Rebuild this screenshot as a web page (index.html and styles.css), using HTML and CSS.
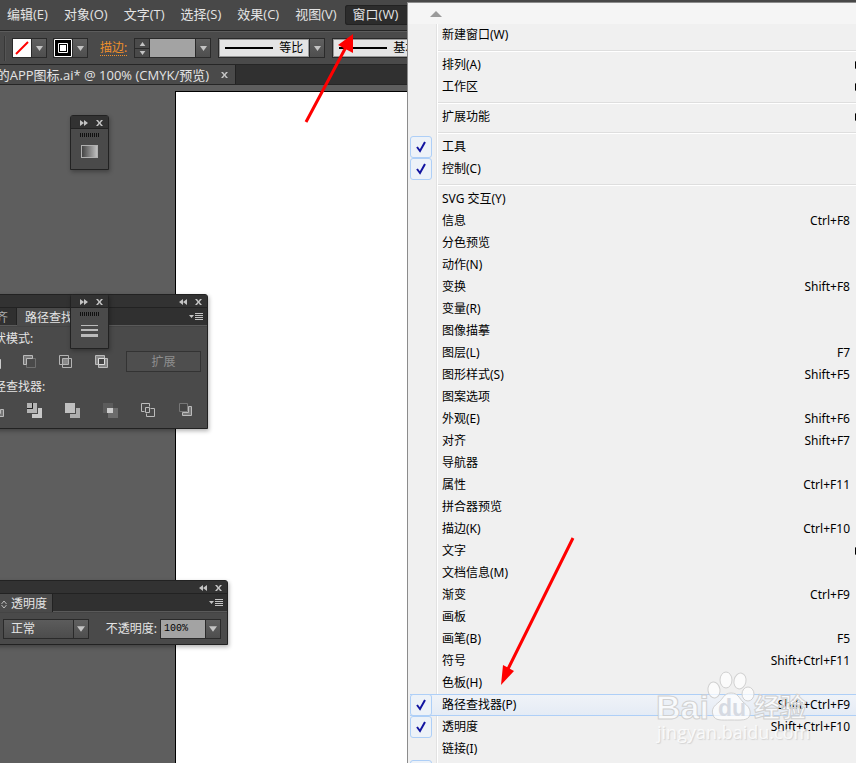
FILE: index.html
```
<!DOCTYPE html>
<html lang="zh-CN">
<head>
    <meta charset="UTF-8">
    <meta name="viewport" content="width=device-width, initial-scale=1.0">
    <title>APP图标.ai</title>
    <link rel="stylesheet" href="styles.css">
</head>
<body>
    <svg class="defs" aria-hidden="true">
        <symbol id="down" viewBox="0 0 7 5"><path d="M0 0h7L3.5 5z"/></symbol>
        <symbol id="up" viewBox="0 0 7 5"><path d="M0 5h7L3.5 0z"/></symbol>
        <symbol id="expand" viewBox="0 0 8 6"><path d="M0 0l4 3-4 3zM4 0l4 3-4 3z"/></symbol>
        <symbol id="collapse" viewBox="0 0 8 6"><path d="M4 0L0 3l4 3zM8 0L4 3l4 3z"/></symbol>
        <symbol id="close" viewBox="0 0 7 6"><path d="M0 0h2l1.500 2L5 0h2L4.500 3 7 6H5L3.500 4 2 6H0l2.500-3z"/></symbol>
        <symbol id="flyout" viewBox="0 0 14 9"><path d="M0 3h5L2.500 6zM6 1h8v1H6zM6 3h8v1H6zM6 5h8v1H6zM6 7h8v1H6z"/></symbol>
        <symbol id="check" viewBox="0 0 10 12"><path d="M1 6l3 4 5-9" fill="none" stroke="#1214a0" stroke-width="2"/></symbol>
    </svg>

    <header class="top">
        <nav class="menubar">
            <button>编辑(E)</button>
            <button>对象(O)</button>
            <button>文字(T)</button>
            <button>选择(S)</button>
            <button>效果(C)</button>
            <button>视图(V)</button>
            <button class="open">窗口(W)</button>
        </nav>

        <div class="controls">
            <span class="grip"></span>
            <div class="combo swatch">
                <button class="fill" aria-label="填色"><svg width="18" height="18"><path d="M3 15L15 3" stroke="#f00" stroke-width="2"/></svg></button>
                <button class="drop" aria-label="填色选项"><svg width="7" height="5"><use href="#down"/></svg></button>
            </div>
            <div class="combo swatch">
                <button class="stroke" aria-label="描边色"><svg width="18" height="18"><path d="M.5.5h17v17H.5zM4.500 4.500h9v9h-9z" fill="none" stroke="#fff"/><path d="M6 6h6v6H6z" fill="#fff"/></svg></button>
                <button class="drop" aria-label="描边选项"><svg width="7" height="5"><use href="#down"/></svg></button>
            </div>
            <label class="link" for="weight">描边:</label>
            <div class="combo weight">
                <div class="spin">
                    <button aria-label="增加"><svg width="7" height="4"><use href="#up"/></svg></button>
                    <button aria-label="减少"><svg width="7" height="4"><use href="#down"/></svg></button>
                </div>
                <input id="weight" type="text">
                <button class="drop" aria-label="粗细选项"><svg width="7" height="5"><use href="#down"/></svg></button>
            </div>
            <div class="combo line">
                <select aria-label="宽度配置"><option>等比</option></select>
                <span class="drop"><svg width="7" height="5"><use href="#down"/></svg></span>
            </div>
            <div class="combo line">
                <select aria-label="画笔定义"><option>基本</option></select>
                <span class="drop"><svg width="7" height="5"><use href="#down"/></svg></span>
            </div>
        </div>

        <div class="tabs">
            <div class="doc-tab">
                <span class="doc-name">的APP图标.ai* @ 100% (CMYK/预览)</span>
                <button aria-label="关闭"><svg width="7" height="6"><use href="#close"/></svg></button>
            </div>
        </div>
    </header>

    <main class="workspace">
        <div class="artboard"></div>
    </main>

    <section class="panel pathfinder">
        <div class="panel-head">
            <button aria-label="折叠"><svg width="8" height="6"><use href="#collapse"/></svg></button>
            <button aria-label="关闭"><svg width="7" height="6"><use href="#close"/></svg></button>
        </div>
        <div class="panel-tabs">
            <button class="tab">对齐</button>
            <button class="tab active">路径查找器</button>
            <button class="flyout" aria-label="面板菜单"><svg width="14" height="9"><use href="#flyout"/></svg></button>
        </div>
        <div class="panel-body">
            <p>形状模式:</p>
            <div class="shapes">
                <button aria-label="联集"><svg width="14" height="14"><path d="M.5.5h9v4h4v9h-9v-4h-4z" fill="#777" stroke="#ccc"/></svg></button>
                <button aria-label="减去顶层"><svg width="14" height="14"><path d="M3.500 3.500h9v9h-9z" fill="none" stroke="#707070"/><path d="M.5.5h9v3h-6v6h-3z" fill="#777" stroke="#bbb"/></svg></button>
                <button aria-label="交集"><svg width="14" height="14"><path d="M4 4h5v5H4z" fill="#888"/><path d="M.5.5h9v9h-9zM3.500 3.500h9v9h-9z" fill="none" stroke="#b4b4b4"/></svg></button>
                <button aria-label="差集"><svg width="14" height="14"><path d="M.5.5h9v9h-9zM3.500 3.500h9v9h-9z" fill="#858585" stroke="#bbb"/><path d="M3.500 3.500h6v6h-6z" fill="#444" stroke="#ddd"/></svg></button>
                <button class="extend" disabled>扩展</button>
            </div>
            <p>路径查找器:</p>
            <div class="finders">
                <button aria-label="分割"><svg width="15" height="15"><path d="M.5 9.500h8v-9M11.500 6.500h3v7h-8v-3h5z" fill="#777" stroke="#bbb"/></svg></button>
                <button aria-label="修边"><svg width="15" height="15"><path d="M0 5h5V0H0zM6 0h4v10H0V6h6z" fill="#b4b4b4"/><path d="M11 5h4v10H5v-4h6z" fill="#c8c8c8"/><path d="M0 5.500h5.500V0" stroke="#222" fill="none"/></svg></button>
                <button aria-label="合并"><svg width="15" height="15"><path d="M0 0h10v10H0z" fill="#c0c0c0"/><path d="M11 5h4v10H5v-4h6z" fill="#adadad"/></svg></button>
                <button aria-label="裁剪"><svg width="15" height="15"><path d="M0 0h10v10H0z" fill="#5c5c5c"/><path d="M5 5h10v10H5z" fill="#6c6c6c"/><path d="M4 5h6v5H4z" fill="#ccc"/></svg></button>
                <button aria-label="轮廓"><svg width="15" height="15"><path d="M8.500 3.500v-3h-8v8h3M9.500 5.500h4v8h-8v-3M4.500 4.500h4v5h-4z" fill="none" stroke="#bbb"/></svg></button>
                <button aria-label="减去后方对象"><svg width="15" height="15"><path d="M.5.5h8v8h-8z" fill="#444" stroke="#777"/><path d="M9.500 3.500h3v9h-9v-3h6z" fill="#777" stroke="#bbb"/></svg></button>
            </div>
        </div>
    </section>

    <section class="panel mini gradient">
        <div class="panel-head">
            <button aria-label="展开"><svg width="8" height="6"><use href="#expand"/></svg></button>
            <button aria-label="关闭"><svg width="7" height="6"><use href="#close"/></svg></button>
        </div>
        <span class="dots"></span>
        <button class="mini-icon" aria-label="渐变"><span class="gradient-icon"></span></button>
    </section>

    <section class="panel mini strokes">
        <div class="panel-head">
            <button aria-label="展开"><svg width="8" height="6"><use href="#expand"/></svg></button>
            <button aria-label="关闭"><svg width="7" height="6"><use href="#close"/></svg></button>
        </div>
        <span class="dots"></span>
        <button class="mini-icon" aria-label="描边"><svg width="17" height="14"><path d="M0 1h17v1H0zM0 5h17v2H0zM0 10h17v3H0z" fill="#bbb"/></svg></button>
    </section>

    <section class="panel opacity">
        <div class="panel-head">
            <button aria-label="折叠"><svg width="8" height="6"><use href="#collapse"/></svg></button>
            <button aria-label="关闭"><svg width="7" height="6"><use href="#close"/></svg></button>
        </div>
        <div class="panel-tabs">
            <button class="tab active"><svg width="6" height="9"><path d="M.5 4L3 1l2.500 3M.5 5L3 8l2.500-3" fill="none" stroke="#bbb"/></svg>透明度</button>
            <button class="flyout" aria-label="面板菜单"><svg width="14" height="9"><use href="#flyout"/></svg></button>
        </div>
        <div class="panel-body opacity-row">
            <div class="combo blend">
                <select aria-label="混合模式"><option>正常</option></select>
                <span class="drop"><svg width="8" height="6"><use href="#down"/></svg></span>
            </div>
            <label for="alpha">不透明度:</label>
            <div class="combo alpha">
                <input id="alpha" type="text" value="100%">
                <button class="drop" aria-label="不透明度选项"><svg width="8" height="6"><use href="#down"/></svg></button>
            </div>
        </div>
    </section>

    <div class="window-menu" role="menu">
        <button class="scroll-up" aria-label="向上滚动"><svg width="12" height="6" viewBox="0 0 12 6"><path d="M0 6L6 0l6 6z"/></svg></button>
        <div class="items">
            <button role="menuitem">新建窗口(W)</button>
            <hr>
            <button role="menuitem" class="sub">排列(A)</button>
            <button role="menuitem" class="sub">工作区</button>
            <hr>
            <button role="menuitem" class="sub">扩展功能</button>
            <hr>
            <button role="menuitem"><span class="mark"><svg width="10" height="12"><use href="#check"/></svg></span>工具</button>
            <button role="menuitem"><span class="mark"><svg width="10" height="12"><use href="#check"/></svg></span>控制(C)</button>
            <hr>
            <button role="menuitem">SVG 交互(Y)</button>
            <button role="menuitem">信息<kbd>Ctrl+F8</kbd></button>
            <button role="menuitem">分色预览</button>
            <button role="menuitem">动作(N)</button>
            <button role="menuitem">变换<kbd>Shift+F8</kbd></button>
            <button role="menuitem">变量(R)</button>
            <button role="menuitem">图像描摹</button>
            <button role="menuitem">图层(L)<kbd>F7</kbd></button>
            <button role="menuitem">图形样式(S)<kbd>Shift+F5</kbd></button>
            <button role="menuitem">图案选项</button>
            <button role="menuitem">外观(E)<kbd>Shift+F6</kbd></button>
            <button role="menuitem">对齐<kbd>Shift+F7</kbd></button>
            <button role="menuitem">导航器</button>
            <button role="menuitem">属性<kbd>Ctrl+F11</kbd></button>
            <button role="menuitem">拼合器预览</button>
            <button role="menuitem">描边(K)<kbd>Ctrl+F10</kbd></button>
            <button role="menuitem" class="sub">文字</button>
            <button role="menuitem">文档信息(M)</button>
            <button role="menuitem">渐变<kbd>Ctrl+F9</kbd></button>
            <button role="menuitem">画板</button>
            <button role="menuitem">画笔(B)<kbd>F5</kbd></button>
            <button role="menuitem">符号<kbd>Shift+Ctrl+F11</kbd></button>
            <button role="menuitem">色板(H)</button>
            <button role="menuitem" class="hover"><span class="mark"><svg width="10" height="12"><use href="#check"/></svg></span>路径查找器(P)<kbd>Shift+Ctrl+F9</kbd></button>
            <button role="menuitem"><span class="mark"><svg width="10" height="12"><use href="#check"/></svg></span>透明度<kbd>Shift+Ctrl+F10</kbd></button>
            <button role="menuitem">链接(I)</button>
            <button role="menuitem" aria-label="下一项"><span class="mark"></span></button>
        </div>
    </div>

    <svg class="arrow" width="856" height="763">
        <path d="M306 122L346 47M573 538L507 671" stroke="#f00" stroke-width="3"/>
        <path d="M353 34l-15 11 15 8zM501 685l2-20 11 6z" fill="#f00"/>
    </svg>

    <svg class="watermark" width="160" height="80">
        <g class="mark-shape">
            <ellipse cx="58" cy="20" rx="6" ry="8" transform="rotate(-8 58 20)"/>
            <ellipse cx="70" cy="10" rx="6" ry="8"/>
            <ellipse cx="84" cy="11" rx="6" ry="8" transform="rotate(12 84 11)"/>
            <ellipse cx="92" cy="24" rx="6" ry="7"/>
            <path d="M75 23c-7 0-8 6-12 9-5 4-8 7-6 13 2 6 8 5 18 5s17 1 19-5c1-6-2-9-7-13-4-4-5-9-12-9z"/>
            <text class="brand" x="0" y="49">Bai</text>
            <text class="brand-cn" x="98" y="47">经验</text>
        </g>
        <text class="paw" x="62" y="46">du</text>
        <text class="site" x="1" y="69">jingyan.baidu.com</text>
    </svg>
</body>
</html>
```

FILE: styles.css
```
* {
    box-sizing: border-box;
}
body {
    margin: 0;
    height: 100vh;
    overflow: hidden;
    position: relative;
    display: flex;
    flex-direction: column;
    background-color: #5e5e5e;
    color: #e4e4e4;
    font: 12px/16px "Noto Sans", "Noto Sans CJK SC", sans-serif;
}
button, input, select {
    font: inherit;
    color: inherit;
    margin: 0;
    padding: 0;
    border: 0;
    border-radius: 0;
    background: none;
    appearance: none;
    white-space: nowrap;
}
svg {
    display: block;
    fill: #c4c4c4;
}
.defs {
    position: absolute;
    width: 0;
    height: 0;
}

/* top bars */
.menubar {
    display: flex;
    align-items: center;
    height: 31px;
    font: 13px/16px "Open Sans", "Noto Sans CJK SC", sans-serif;
    background-color: #484848;
    border-bottom: 1px solid #262626;
}
.menubar button {
    height: 20px;
    padding: 0 8px 2px;
    flex: none;
}
.menubar .open {
    padding-right: 12px;
    background-color: #2c2c2c;
    border-radius: 3px;
    box-shadow: inset 0 0 0 1px #222;
}
.menubar button:first-child {
    padding-left: 7px;
}
.controls {
    display: flex;
    align-items: center;
    height: 34px;
    overflow: hidden;
    background-color: #4a4a4a;
    border-top: 1px solid #5c5c5c;
    border-bottom: 1px solid #262626;
}
.grip {
    flex: none;
    width: 2px;
    height: 25px;
    margin: 0 6px 0 4px;
    background-color: #383838;
    border-right: 1px solid #555;
}
.combo {
    display: flex;
    flex: none;
    height: 20px;
    border: 1px solid #2a2a2a;
    background-color: #4a4a4a;
}
.drop {
    display: flex;
    align-items: center;
    justify-content: center;
    width: 15px;
    flex: none;
    border-left: 1px solid #2a2a2a;
    background-image: linear-gradient(#606060, #4e4e4e);
}
.swatch {
    margin-right: 6px;
}
.fill {
    background-color: #fff;
}
.stroke {
    background-color: #000;
}
.link {
    margin: 0 7px 0 6px;
    color: #f0902a;
    line-height: 14px;
    border-bottom: 1px dotted #f0902a;
}
.weight {
    margin-right: 7px;
}
.spin {
    display: grid;
    grid-template-rows: 1fr 1fr;
    width: 15px;
    border-right: 1px solid #2a2a2a;
}
.spin button {
    display: flex;
    align-items: center;
    justify-content: center;
}
.spin button + button {
    border-top: 1px solid #2a2a2a;
}
.weight input {
    width: 45px;
    background-color: #a3a3a3;
}
.line {
    margin-right: 7px;
}
.line select {
    width: 90px;
    padding-left: 59px;
    color: #000;
    border: 1px solid #999;
    background: linear-gradient(#000, #000) 5px 7px / 48px 2px no-repeat #e4e4e4;
}
.tabs {
    display: flex;
    height: 20px;
    background-color: #303030;
    border-bottom: 1px solid #262626;
}
.doc-tab {
    display: flex;
    align-items: center;
    justify-content: flex-end;
    width: 236px;
    padding-right: 7px;
    gap: 12px;
    font: 13px/20px "Open Sans", "Noto Sans CJK SC", sans-serif;
    background-color: #4a4a4a;
    border-right: 1px solid #222;
}
.doc-name {
    flex: none;
}

/* canvas */
.workspace {
    flex: 1;
    display: flex;
    padding: 6px 0 0 175px;
}
.artboard {
    flex: 1;
    background-color: #fff;
    border: 1px solid #000;
    border-bottom: 0;
}

/* floating panels */
.panel {
    position: absolute;
    background-color: #4a4a4a;
    border: 1px solid #222;
    border-radius: 3px 3px 0 0;
    box-shadow: 1px 2px 4px rgba(0, 0, 0, 0.3);
}
.panel-head {
    display: flex;
    align-items: center;
    justify-content: flex-end;
    gap: 8px;
    height: 13px;
    padding: 1px 5px 0 0;
    background-color: #323232;
    border-bottom: 1px solid #222;
}
.panel-tabs {
    display: flex;
    height: 18px;
    background-color: #303030;
    border-bottom: 1px solid #5a5a5a;
}
.tab {
    display: flex;
    align-items: center;
    padding: 2px 8px 0;
    color: #aaa;
    border-right: 1px solid #222;
}
.tab.active {
    height: 18px;
    color: #e4e4e4;
    background-color: #4a4a4a;
}
.flyout {
    margin: 0 4px 0 auto;
}
.pathfinder {
    top: 294px;
    left: -60px;
    width: 268px;
}
.pathfinder .panel-tabs {
    padding-left: 35px;
}
.panel-body {
    border-top: 1px solid #444;
}
.pathfinder .panel-body {
    padding: 4px 6px 10px 41px;
}
.panel-body p {
    margin: 0;
    line-height: 16px;
}
.shapes {
    display: flex;
    align-items: center;
    gap: 22px;
    margin: 4px 0 7px 5px;
}
.extend {
    flex: 1;
    height: 21px;
    margin-left: -5px;
    color: #8e8e8e;
    border: 1px solid #333;
    background-color: #4e4e4e;
}
.finders {
    display: flex;
    gap: 23px;
    padding: 8px 0 0 7px;
}
.mini {
    left: 70px;
    width: 39px;
    height: 55px;
}
.gradient {
    top: 115px;
}
.strokes {
    top: 294px;
}
.dots {
    display: block;
    width: 20px;
    height: 4px;
    margin: 4px auto 8px;
    background-image: repeating-linear-gradient(90deg, #111 0 1px, #4a4a4a 1px 2px);
}
.mini-icon {
    display: block;
    margin: 0 auto;
}
.gradient-icon {
    display: block;
    width: 17px;
    height: 13px;
    border: 1px solid #b0b0b0;
    background-image: linear-gradient(90deg, #444, #c0c0c0);
}
.opacity {
    top: 580px;
    left: -10px;
    width: 238px;
}
.opacity .tab {
    gap: 4px;
    padding: 2px 5px 0 10px;
}
.opacity-row {
    display: flex;
    align-items: center;
    padding: 6px 6px 5px 12px;
}
.blend {
    width: 86px;
}
.blend select {
    flex: 1;
    padding-left: 7px;
    background-image: linear-gradient(#5c5c5c, #4c4c4c);
}
.opacity-row label {
    margin: 0 3px 0 auto;
}
.alpha {
    width: 61px;
}
.alpha input {
    flex: 1;
    min-width: 0;
    padding-left: 3px;
    color: #000;
    background-color: #a3a3a3;
    font: 10px/16px "Liberation Mono", monospace;
}

/* window drop-down, runs off the right edge of the screen */
.window-menu {
    position: absolute;
    top: 2px;
    bottom: 0;
    left: 407px;
    right: -12px;
    overflow: hidden;
    color: #000;
    background-color: #f0f0f0;
    border: 1px solid #8c8c8c;
    border-bottom: 0;
}
.scroll-up {
    display: block;
    width: 100%;
    height: 21px;
    padding-left: 22px;
    background-color: #f5f5f5;
}
.scroll-up svg {
    fill: #9a9a9a;
}
.items {
    padding-left: 2px;
    background: linear-gradient(90deg, #e2e2e2 50%, #fff 50%) 28px 0 / 2px 100% no-repeat;
}
.items button {
    display: flex;
    align-items: center;
    position: relative;
    width: 100%;
    height: 22px;
    padding: 0 17px 0 32px;
}
.items hr {
    height: 2px;
    margin: 4px 0 2px 28px;
    border: 0;
    border-top: 1px solid #dedede;
    border-bottom: 1px solid #fff;
}
.items kbd {
    margin-left: auto;
    font: inherit;
}
.items .sub::after {
    content: "";
    margin-left: auto;
    margin-right: -10px;
    border: 4px solid transparent;
    border-left: 5px solid #000;
    border-right: 0;
}
.items .hover {
    background-image: linear-gradient(#f0f3f8, #e4ebf5);
    box-shadow: inset 0 1px #aecff7, inset 0 -1px #aecff7;
}
.mark {
    position: absolute;
    left: 0;
    top: 0;
    display: flex;
    align-items: center;
    justify-content: center;
    width: 22px;
    height: 22px;
    border: 1px solid #aecff7;
    border-radius: 3px;
    background-color: #edf2f8;
}

/* overlays */
.arrow {
    position: absolute;
    top: 0;
    left: 0;
    pointer-events: none;
}
.watermark {
    position: absolute;
    top: 670px;
    left: 656px;
    overflow: visible;
    pointer-events: none;
}
.mark-shape {
    fill: rgba(255, 255, 255, 0.7);
    stroke: #d0d0d0;
    stroke-width: 1px;
}
.brand {
    font: bold 34px "Liberation Sans", sans-serif;
}
.brand-cn {
    font: bold 26px "Noto Sans CJK SC", sans-serif;
}
.paw {
    font: bold 23px "Liberation Sans", sans-serif;
    fill: #d6dae2;
}
.site {
    font: 18px "Open Sans", sans-serif;
    fill: rgba(255, 255, 255, 0.8);
    text-shadow: 1px 1px 1px #ccc;
}
```
